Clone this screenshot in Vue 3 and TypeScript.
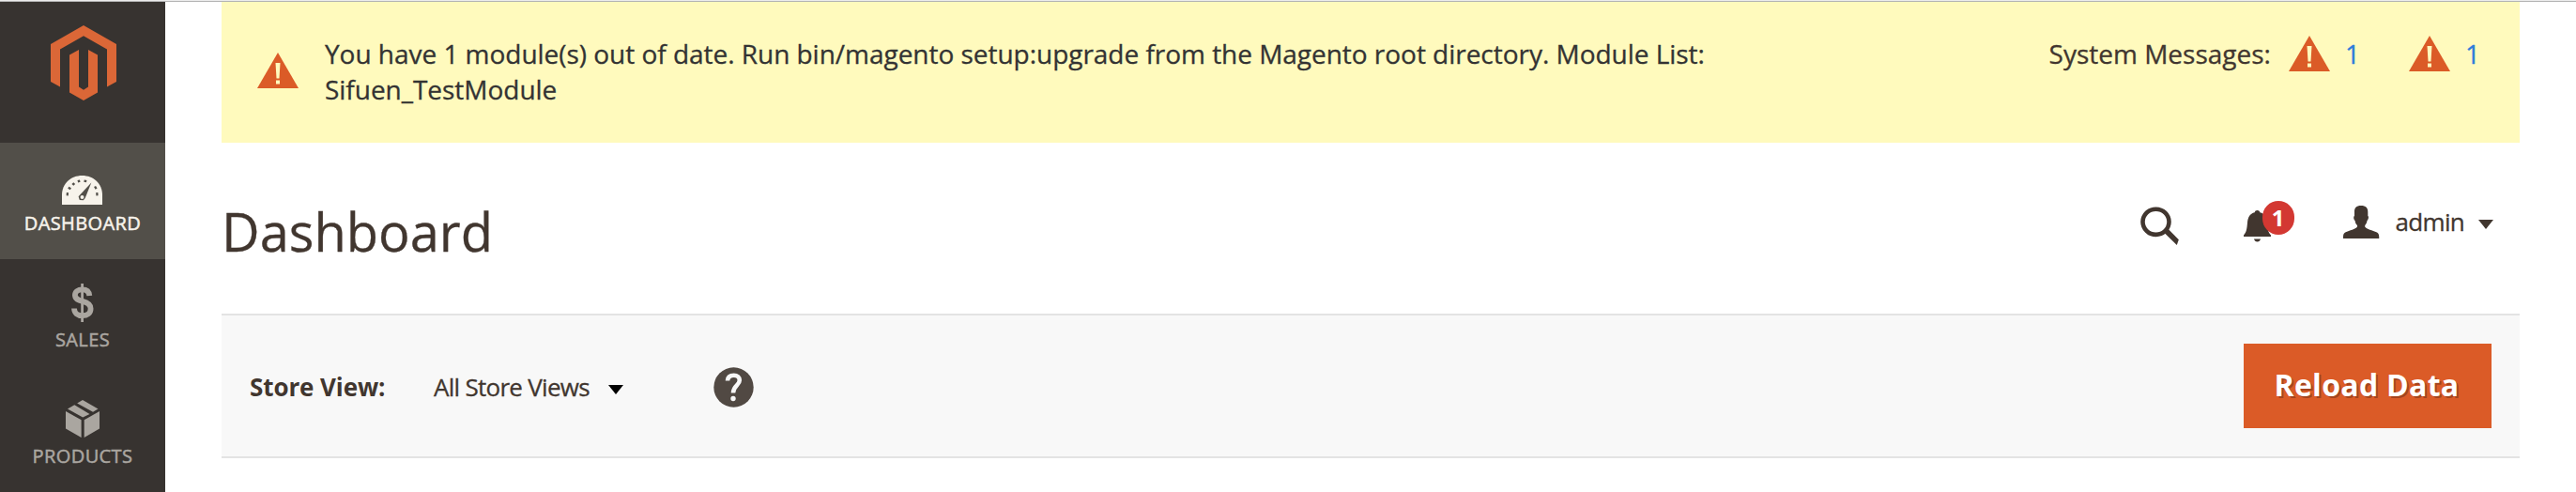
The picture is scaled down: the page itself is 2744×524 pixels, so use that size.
<script setup lang="ts">
interface NavItem {
  id: string
  label: string
  active?: boolean
}

const navItems: NavItem[] = [
  { id: 'dashboard', label: 'DASHBOARD', active: true },
  { id: 'sales', label: 'SALES' },
  { id: 'products', label: 'PRODUCTS' },
]

const systemMessages: number[] = [1, 1]
</script>

<template>
  <div class="page">
    <div class="topline"></div>
    <div class="shell">
      <aside class="sidebar">
        <div class="logo">
          <svg width="70" height="80" viewBox="0 0 70 80" fill="#db6737">
            <path d="M35 0 70 20V60L60 65.6V25.4L35 11.3 10 25.4V65.6L0 60V20Z" />
            <path d="M20 31.6 30 26V65.5L35 68.8 40 65.5V26L50 31.6V71.5L35 80 20 71.5Z" />
          </svg>
        </div>
        <nav>
          <a v-for="item in navItems" :key="item.id" class="nav-item" :class="[item.id, { active: item.active }]">
            <span class="nav-icon">
              <svg v-if="item.id === 'dashboard'" width="43" height="31" viewBox="0 0 43 31">
                <path fill="#f7f3eb" d="M0 31V20.500C0 8.500 9.500 0 21.500 0S43 8.500 43 20.500V31Z" />
                <g fill="#524f49">
                  <rect x="4.700" y="18.200" width="2.200" height="3.200" transform="rotate(5 6 20)" />
                  <rect x="6.800" y="12.200" width="3" height="2.300" transform="rotate(30 8 13)" />
                  <rect x="11" y="7.700" width="2.600" height="2.600" transform="rotate(45 12.300 9)" />
                  <rect x="16.800" y="4.700" width="2.500" height="2.500" transform="rotate(-15 18 6)" />
                  <rect x="23.500" y="4.700" width="2.700" height="2.400" transform="rotate(12 25 6)" />
                  <rect x="34" y="12.200" width="3" height="2.300" transform="rotate(-120 35.500 13)" />
                  <rect x="36.300" y="18.200" width="2.200" height="3.200" transform="rotate(-5 37 20)" />
                  <path d="M31.300 7.500 24.700 24 22.800 26.300 18.800 26 17.600 22.200Z" />
                </g>
                <circle cx="21.500" cy="23" r="2" fill="#f7f3eb" />
              </svg>
              <svg v-else-if="item.id === 'sales'" width="24" height="41" viewBox="0 0 24 41" fill="none" stroke="#aaa6a0">
                <path stroke-width="5.800" d="M19.300 13C18.900 8.600 16 6.400 11.700 6.400 7 6.400 3.900 8.700 3.900 12.300 3.900 16.500 7.500 17.700 12 18.900 17 20.200 20.600 21.900 20.600 26.700 20.600 31.600 17 34.200 11.800 34.200 6.500 34.200 3.200 31.500 3 26.500" />
                <path stroke-width="2.800" d="M11.600 0V41" />
              </svg>
              <svg v-else width="36" height="40" viewBox="0 0 36 40" fill="#aaa6a0">
                <path d="M18 0 34.500 9.400 29 12.700 12.200 3.400Z" />
                <path d="M9.300 5.300 25.500 15 18.200 18.600 2 9.600Z" />
                <path d="M0 12 16.600 21.200V40L0 30.500Z" />
                <path d="M19.700 21.200 36 12V30.500L19.700 40Z" />
              </svg>
            </span>
            <span class="nav-label">{{ item.label }}</span>
          </a>
        </nav>
      </aside>

      <main class="content">
        <section class="notice">
          <svg class="warn" width="44" height="38" viewBox="0 0 44 38">
            <path fill="#db5b27" d="M22 0 44 38H0Z" />
            <path fill="#fffabd" d="M19.500 11H24.500L23.500 27.500H20.500ZM20 29.500H24V33.500H20Z" />
          </svg>
          <p class="notice-text">
            You have 1 module(s) out of date. Run bin/magento setup:upgrade from the Magento root directory. Module List:<br />Sifuen_TestModule
          </p>
          <div class="system">
            <span class="system-label">System Messages:</span>
            <a v-for="(count, i) in systemMessages" :key="i" class="system-link">
              <svg width="44" height="38" viewBox="0 0 44 38">
                <path fill="#db5b27" d="M22 0 44 38H0Z" />
                <path fill="#fffabd" d="M19.500 11H24.500L23.500 27.500H20.500ZM20 29.500H24V33.500H20Z" />
              </svg>
              <span>{{ count }}</span>
            </a>
          </div>
        </section>

        <header class="header">
          <h1>Dashboard</h1>
          <div class="tools">
            <svg class="search" width="42" height="42" viewBox="0 0 42 42">
              <ellipse cx="16.500" cy="16.300" rx="14" ry="13.600" fill="none" stroke="#41362f" stroke-width="4.600" />
              <path fill="#41362f" d="M25.500 28 29.700 24 40.800 35.300 38.800 41Z" />
            </svg>
            <div class="bell">
              <svg width="30" height="35" viewBox="0 0 30 35" fill="#41362f">
                <path d="M14.500 0C16 0 17 .8 17.300 2.200 22.500 3.500 24.500 7.500 25 13 25.500 20 26 23.500 29 26.500V28H0V26.500C3 23.500 3.400 20 4 13 4.500 7.500 6.500 3.500 11.700 2.200 12 .8 13 0 14.500 0Z" />
                <path d="M11 30.500H18C17.500 32.500 16.300 33.500 14.500 33.500S11.500 32.500 11 30.500Z" />
              </svg>
              <span class="badge">1</span>
            </div>
            <svg class="user" width="39" height="35" viewBox="0 0 39 35" fill="#41362f">
              <path d="M19 0C24 0 26.500 2.500 26.300 7V11C27.500 11.500 27 15 25.500 16 25 19 24 20 23.200 21V22.500C25 25.500 31 26 36 28.500 37.800 29.500 38.300 31 38.300 35H0C0 31 .3 29.500 2.200 28.500 7 26 13 25.500 15 22.500V21C14 20 13 19 12.600 16 11 15 10.800 11.500 12 11V7C11.800 2.500 14 0 19 0Z" />
            </svg>
            <span class="username">admin</span>
            <svg class="caret" width="16" height="10" viewBox="0 0 16 10"><path fill="#41362f" d="M0 0H16L8 10Z" /></svg>
          </div>
        </header>

        <section class="storebar">
          <span class="store-label">Store View:</span>
          <span class="store-value">All Store Views</span>
          <svg class="store-caret" width="16" height="10" viewBox="0 0 16 10"><path d="M0 0H16L8 10Z" /></svg>
          <svg class="help" width="43" height="43" viewBox="0 0 43 43">
            <circle cx="21.500" cy="21.500" r="21.200" fill="#514943" />
            <path fill="none" stroke="#f8f8f8" stroke-width="4.600" d="M15 14.500C15.200 10.500 18 8.800 21.700 8.800 25.500 8.800 27.800 11 27.800 14 27.800 19.500 21 19.500 21 27.500" />
            <circle cx="21" cy="33.500" r="2.700" fill="#f8f8f8" />
          </svg>
          <button type="button" class="reload">Reload Data</button>
        </section>
      </main>
    </div>
  </div>
</template>

<style>
body {
  margin: 0;
  background: #fff;
}
</style>

<style scoped>
.page {
  width: 2744px;
  height: 524px;
  overflow: hidden;
  display: flex;
  flex-direction: column;
  font-family: "Open Sans", "Noto Sans", sans-serif;
  color: #41362f;
}
.topline {
  height: 1px;
  flex: none;
  background: #ececec;
  border-bottom: 1px solid #b4b4b4;
}
.shell {
  display: flex;
  flex: 1;
}
.sidebar {
  width: 176px;
  flex: none;
  background: #373330;
}
.logo {
  box-sizing: border-box;
  height: 150px;
  padding: 25px 0 0 54px;
}
.logo svg {
  display: block;
}
.nav-item {
  height: 124px;
  display: flex;
  flex-direction: column;
  align-items: center;
  color: #aaa6a0;
}
.nav-item.active {
  background: #524f49;
  color: #f7f3eb;
}
.nav-icon {
  height: 73px;
  box-sizing: border-box;
  padding: 26px 1px 0 0;
  flex: none;
}
.dashboard .nav-icon {
  padding-top: 35px;
}
.nav-icon svg {
  display: block;
}
.nav-label {
  font-size: 20px;
  line-height: 26px;
  letter-spacing: 0.4px;
  -webkit-text-stroke: 0.5px currentColor;
}
.content {
  width: 2448px;
  margin-left: 60px;
}
.notice {
  box-sizing: border-box;
  height: 150px;
  background: #fffabd;
  display: flex;
  align-items: flex-start;
  padding: 36px 42px 0 38px;
  -webkit-text-stroke: 0.3px currentColor;
}
.warn {
  margin-top: 18px;
  flex: none;
}
.notice-text {
  margin: 0 auto 0 28px;
  font-size: 28px;
  line-height: 38px;
  letter-spacing: -0.03px;
  color: #333;
  white-space: nowrap;
}
.system {
  display: flex;
  font-size: 28px;
  line-height: 38px;
}
.system-label {
  margin-right: 19px;
}
.system-link {
  display: flex;
  gap: 16px;
  color: #2f7bdb;
}
.system-link + .system-link {
  margin-left: 52px;
}
.header {
  height: 182px;
  display: flex;
  align-items: flex-start;
  justify-content: space-between;
}
h1 {
  margin: 56px 0 0;
  font-size: 56px;
  line-height: 76px;
  font-weight: 400;
  -webkit-text-stroke: 0.3px currentColor;
}
.tools {
  display: flex;
  align-items: flex-start;
  padding-right: 28px;
}
.search {
  margin-top: 68px;
}
.bell {
  position: relative;
  margin: 72px 0 0 68px;
  width: 54px;
}
.bell svg {
  display: block;
}
.badge {
  position: absolute;
  left: 20px;
  top: -10px;
  width: 34px;
  height: 36px;
  border-radius: 17px;
  background: #d33832;
  color: #fff;
  font-size: 24px;
  line-height: 35px;
  font-weight: 700;
  text-align: center;
}
.user {
  margin: 67px 0 0 52px;
}
.username {
  margin: 66px 0 0 17px;
  font-size: 26px;
  line-height: 36px;
  letter-spacing: -0.7px;
  -webkit-text-stroke: 0.3px currentColor;
}
.caret {
  margin: 82px 0 0 15px;
}
.storebar {
  box-sizing: border-box;
  height: 154px;
  background: #f8f8f8;
  border-top: 2px solid #e3e3e3;
  border-bottom: 2px solid #e3e3e3;
  display: flex;
  align-items: flex-start;
  padding: 0 30px;
}
.store-label,
.store-value {
  margin-top: 58px;
  font-size: 26px;
  line-height: 36px;
  white-space: nowrap;
}
.store-label {
  font-weight: 700;
  width: 196px;
  letter-spacing: -0.1px;
}
.store-value {
  width: 186px;
  letter-spacing: -0.72px;
  -webkit-text-stroke: 0.3px currentColor;
}
.store-caret {
  margin-top: 74px;
}
.help {
  margin: 55px 0 0 96px;
}
.reload {
  margin: 30px 0 0 auto;
  width: 264px;
  height: 90px;
  padding: 0 2px 2px 0;
  border: 0;
  background: #db5b27;
  color: #fff;
  font: 700 32px/46px "Open Sans", sans-serif;
  letter-spacing: 0.3px;
  text-shadow: 2px 2px 0 rgba(0, 0, 0, 0.25);
}
</style>
